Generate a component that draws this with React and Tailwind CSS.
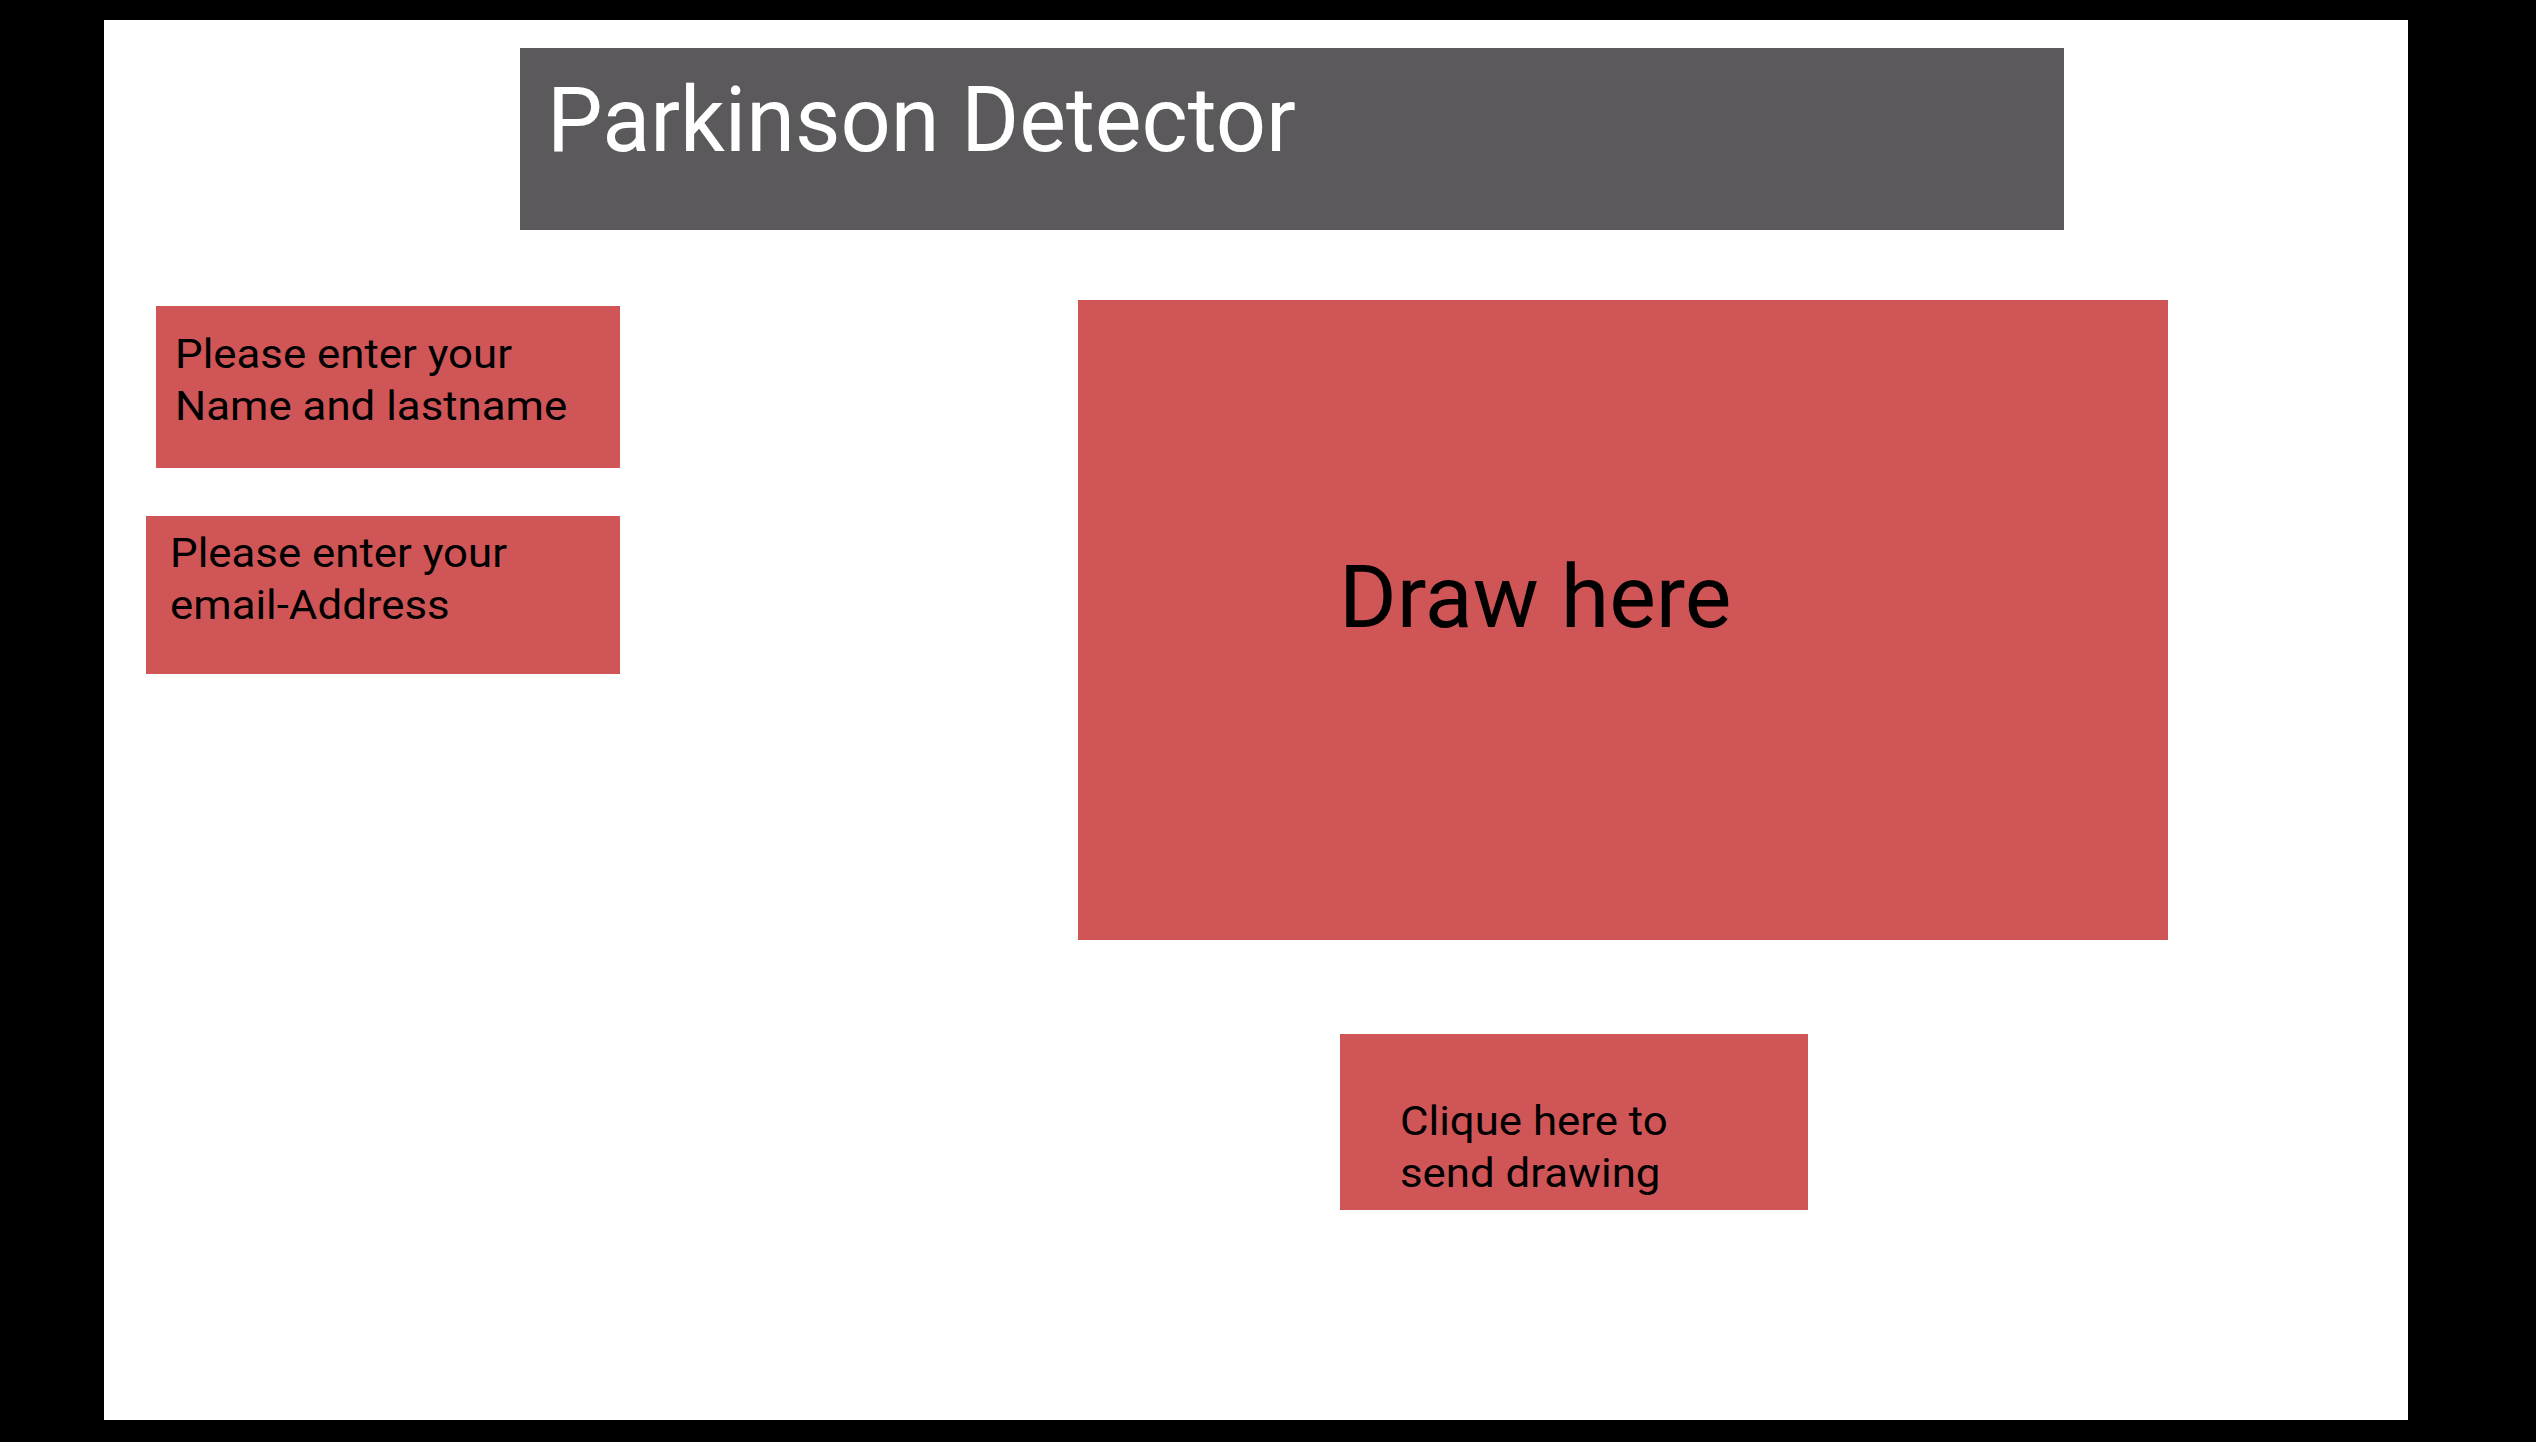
const Field = ({ lines, className, textClassName }) => (
    <div className={`bg-[#cf5557] text-black ${className}`}>
        {/* text in the mockup is stretched a bit wider than plain Roboto */}
        <div className={`text-[40px] leading-[52px] origin-left scale-x-[1.095] ${textClassName || ''}`}>
            {lines.map(line => (
                <span key={line} className="block whitespace-nowrap">{line}</span>
            ))}
        </div>
    </div>
);

const App = () => {
    return (
        <div className="w-full h-[1442px] bg-black overflow-hidden font-['Roboto',_'Liberation_Sans',_sans-serif] pt-[20px]">
            <div className="ml-[104px] w-[2304px] h-[1400px] bg-white pt-[28px]">
                {/* Title bar */}
                <header className="ml-[416px] w-[1544px] h-[182px] bg-[#5b595c] pl-[27px] pt-[28px]">
                    <h1 className="text-[90px] leading-none text-white font-normal origin-left scale-x-[0.98]">Parkinson Detector</h1>
                </header>

                <div className="flex items-start mt-[70px]">
                    {/* Inputs */}
                    <div className="ml-[42px] mt-[6px] w-[474px] flex flex-col items-end">
                        <Field
                            className="w-[464px] h-[162px] pl-[19px] pt-[23px]"
                            lines={['Please enter your', 'Name and lastname']}
                        />
                        <Field
                            className="w-[474px] h-[158px] mt-[48px] pl-[24px] pt-[12px]"
                            lines={['Please enter your', 'email-Address']}
                        />
                    </div>

                    {/* Drawing area + send button */}
                    <div className="ml-[458px] flex flex-col">
                        <div className="w-[1090px] h-[640px] bg-[#cf5557] pl-[261px] pt-[253px]">
                            <p className="text-[88px] leading-none text-black">Draw here</p>
                        </div>
                        <Field
                            className="ml-[262px] mt-[94px] w-[468px] h-[176px] pl-[60px] pt-[62px]"
                            lines={['Clique here to', 'send drawing']}
                        />
                    </div>
                </div>
            </div>
        </div>
    );
};

export default App;
